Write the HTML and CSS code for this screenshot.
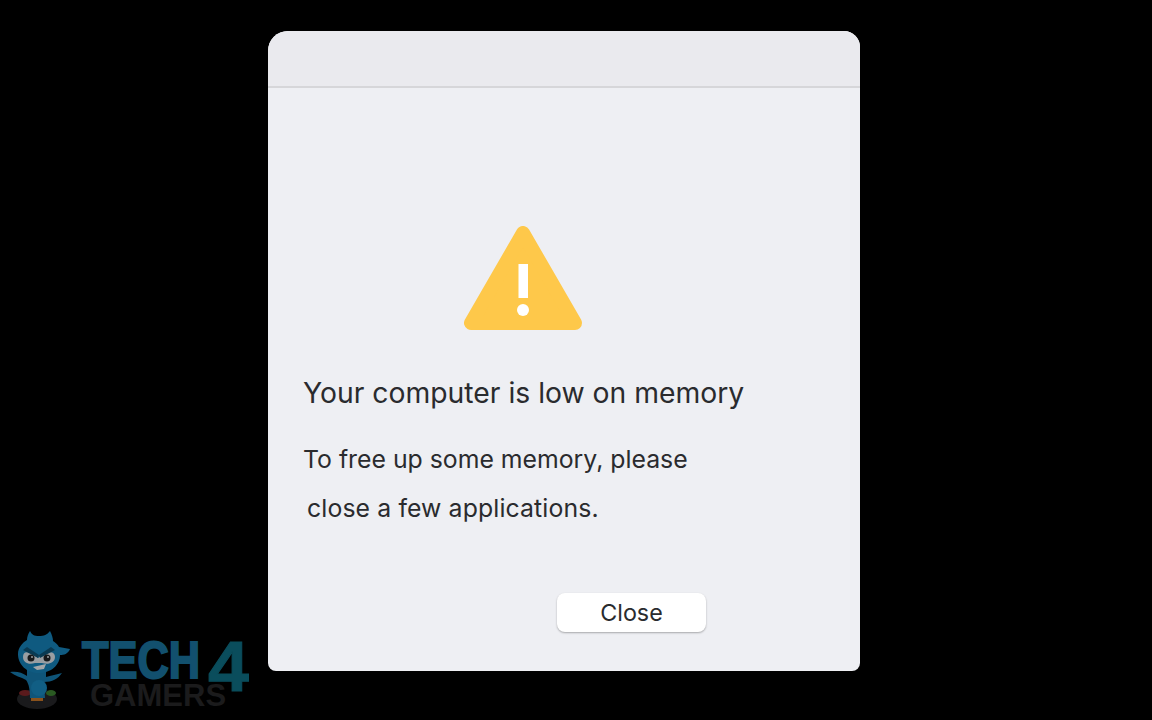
FILE: index.html
```html
<!DOCTYPE html>
<html lang="en">
<head>
    <meta charset="UTF-8">
    <meta name="viewport" content="width=device-width, initial-scale=1.0">
    <title>Low Memory Alert</title>
    <link rel="stylesheet" href="styles.css">
</head>
<body>
    <div class="dialog">
        <div class="title-bar"></div>
        <div class="dialog-body">
            <svg class="warning-icon" width="118" height="104" viewBox="0 0 118 104">
                <polygon points="59,7 7,97 111,97" fill="#fec84a" stroke="#fec84a" stroke-width="14" stroke-linejoin="round"/>
                <rect x="54.5" y="38" width="9.5" height="34" fill="#fff"/>
                <circle cx="59" cy="84" r="6" fill="#fff"/>
            </svg>
            <h1>Your computer is low on memory</h1>
            <p class="line">To free up some memory, please</p>
            <p class="line line-indent">close a few applications.</p>
            <button class="btn-close">Close</button>
        </div>
    </div>

    <!-- watermark -->
    <div class="logo">
        <svg class="mascot" width="62" height="82" viewBox="0 0 62 82">
            <!-- base and buttons -->
            <ellipse cx="27" cy="69" rx="20" ry="10" fill="#1a1a1c"/>
            <ellipse cx="15" cy="63" rx="6" ry="3" fill="#5a1a1c"/>
            <ellipse cx="41" cy="63" rx="5" ry="3" fill="#2a5a22"/>
            <rect x="21" y="67" width="12" height="4" fill="#8a521c"/>
            <!-- arms, body and fist -->
            <path d="M0 42 C6 41 12 42 17 46 L17 40 L36 40 L36 47 C41 46 47 44 52 43 C48 49 42 52 34 52 L35 68 L20 68 C20 60 19 54 16 50 C11 47 5 46 0 42 Z" fill="#0f5579"/>
            <circle cx="29" cy="58" r="8" fill="#115e84"/>
            <!-- head, horns and tail -->
            <path d="M20 1 C22 5 24 6 29 6 C34 6 37 5 40 1 C42 5 43 8 43 11 C46 13 48 15 49 17 L60 19 C58 24 54 25 50 25 C50 35 41 43 29 43 C17 43 8 35 8 24 C8 18 12 13 17 10 C17 7 18 4 20 1 Z" fill="#0f5a80"/>
            <!-- face -->
            <path d="M13 27 C13 21 18 20 28 28 C38 20 45 21 45 27 C45 33 38 35 32 33 L25 33 C19 35 13 33 13 27 Z" fill="#9a9ea2"/>
            <path d="M13 20 L28 28 L29 25 L17 17 Z M45 20 L30 28 L29 25 L41 17 Z" fill="#0a3a52"/>
            <circle cx="21" cy="28" r="3.5" fill="#17191b"/>
            <circle cx="37" cy="28" r="3.5" fill="#17191b"/>
            <circle cx="22" cy="27" r="1" fill="#9a9ea2"/>
            <circle cx="38" cy="27" r="1" fill="#9a9ea2"/>
            <path d="M23 37 L36 34 L34 39 L27 40 Z" fill="#a4a6a8"/>
        </svg>
        <div class="logo-text">
            <span class="logo-tech">TECH</span>
            <span class="logo-four">4</span>
            <span class="logo-gamers">GAMERS</span>
        </div>
    </div>
</body>
</html>
```

FILE: styles.css
```css
body {
    font-family: Inter, 'Liberation Sans', sans-serif;
    margin: 0;
    height: 720px;
    overflow: hidden;
    background-color: #000;
    color: #2a2b2e;
    box-sizing: border-box;
    padding: 31px 0 0 268px;
}

.dialog {
    width: 592px;
    height: 640px;
    background-color: #eeeff3;
    border-radius: 20px 16px 8px 8px;
    overflow: hidden;
}

.title-bar {
    height: 57px;
    background-color: #eaeaee;
    border-bottom: 2px solid #d6d6d9;
    box-sizing: border-box;
}

.dialog-body {
    padding: 138px 0 0 35px;
    display: flex;
    flex-direction: column;
    align-items: flex-start;
}

.warning-icon {
    display: block;
    margin-left: 161px;
}

h1 {
    margin: 44px 0 0;
    font-size: 28.3px;
    line-height: 38px;
    font-weight: 400;
}

.line {
    margin: 32px 0 0;
    font-size: 24.8px;
    line-height: 30px;
}

.line-indent {
    margin-top: 19px;
    padding-left: 4px;
    letter-spacing: 0.12px;
}

.btn-close {
    width: 149px;
    height: 39px;
    margin: 70px 0 0 254px;
    padding: 0;
    border: none;
    border-radius: 8px;
    background-color: #fff;
    box-shadow: 0 1px 2px rgba(0, 0, 0, 0.3);
    font-family: inherit;
    font-size: 23.3px;
    color: #2a2b2e;
}

.logo {
    position: absolute;
    left: 10px;
    top: 630px;
    display: flex;
}

.mascot {
    display: block;
}

.logo-text {
    position: relative;
    width: 170px;
    height: 80px;
    margin-left: 9px;
    font-family: 'Liberation Sans', sans-serif;
    font-weight: 700;
}

.logo-tech,
.logo-four,
.logo-gamers {
    position: absolute;
    transform-origin: left top;
    line-height: 0.72;
    white-space: nowrap;
}

.logo-tech {
    left: 1px;
    top: 13px;
    font-size: 51px;
    color: #12506e;
    -webkit-text-stroke: 2px #12506e;
    transform: scaleX(0.85);
}

.logo-four {
    left: 127px;
    top: 12px;
    font-size: 70px;
    color: #0a4d5c;
    -webkit-text-stroke: 1px #0a4d5c;
    transform: scaleX(1.05);
}

.logo-gamers {
    left: 9px;
    top: 55px;
    font-size: 31px;
    color: #1b1b1c;
}
```
